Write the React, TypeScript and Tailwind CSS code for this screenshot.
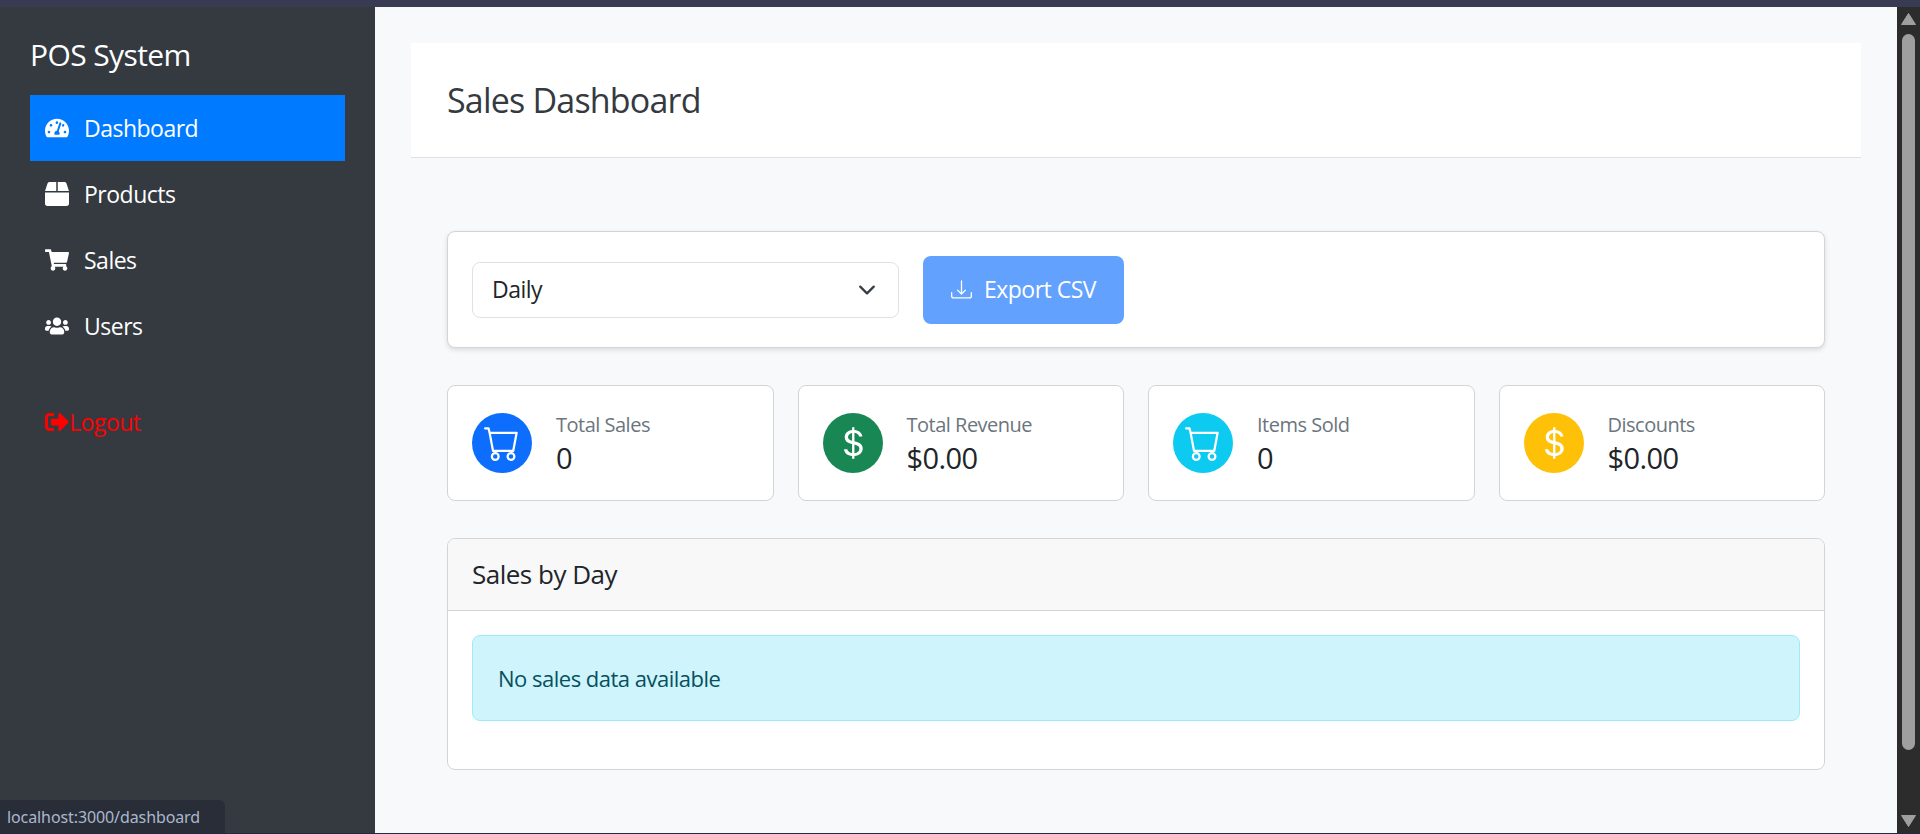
import React from 'react';
import { FaTachometerAlt, FaBox, FaShoppingCart, FaUsers, FaSignOutAlt } from 'react-icons/fa';
import { BsCart, BsCurrencyDollar, BsDownload, BsChevronDown } from 'react-icons/bs';

const navItems = [
  { label: 'Dashboard', icon: FaTachometerAlt, active: true },
  { label: 'Products', icon: FaBox, active: false },
  { label: 'Sales', icon: FaShoppingCart, active: false },
  { label: 'Users', icon: FaUsers, active: false },
];

const stats = [
  { label: 'Total Sales', value: '0', icon: BsCart, color: 'bg-[#0d6efd]' },
  { label: 'Total Revenue', value: '$0.00', icon: BsCurrencyDollar, color: 'bg-[#198754]' },
  { label: 'Items Sold', value: '0', icon: BsCart, color: 'bg-[#0dcaf0]' },
  { label: 'Discounts', value: '$0.00', icon: BsCurrencyDollar, color: 'bg-[#ffc107]' },
];

const Sidebar = () => (
  <aside className="w-[375px] shrink-0 bg-[#343a40] px-[30px] pt-[30px]">
    <h1 className="text-[30px] leading-[36px] font-medium text-white tracking-[-0.6px] mb-[22px]">POS System</h1>
    <nav className="flex flex-col">
      {navItems.map(({ label, icon: Icon, active }) => (
        <a
          key={label}
          href="#"
          className={`flex items-center h-[66px] px-[15px] text-[23px] tracking-[-0.5px] text-white ${active ? 'bg-[#007bff]' : ''}`}
        >
          <Icon className="w-[24px] h-[24px] mr-[15px] shrink-0" />
          <span>{label}</span>
        </a>
      ))}
    </nav>
    <a href="#" className="flex items-center h-[66px] px-[15px] mt-[30px] text-[23px] tracking-[-0.5px] text-[#ff0000]">
      <FaSignOutAlt className="w-[24px] h-[24px] shrink-0" />
      <span>Logout</span>
    </a>
  </aside>
);

const StatCard = ({ label, value, icon: Icon, color }: (typeof stats)[number]) => (
  <div className="flex items-center h-[116px] px-[24px] bg-white border border-[#d3d4d5] rounded-[8px]">
    <div className={`flex items-center justify-center w-[60px] h-[60px] rounded-full text-white ${color}`}>
      <Icon className="w-[36px] h-[36px]" />
    </div>
    <div className="ml-[24px]">
      <div className="text-[20px] leading-[30px] text-[#6c757d] tracking-[-0.5px]">{label}</div>
      <div className="text-[29px] leading-[36px] font-medium text-[#212529] tracking-[-0.6px]">{value}</div>
    </div>
  </div>
);

const Scrollbar = () => (
  <div className="w-[23px] shrink-0 bg-[#2c2c2c] flex flex-col items-center">
    <svg viewBox="0 0 15 12" className="w-[15px] h-[12px] mt-[6px] shrink-0">
      <path d="M7.5 0.5 L14.5 11.5 L0.5 11.5 Z" fill="#9f9f9f" stroke="#9f9f9f" strokeLinejoin="round" />
    </svg>
    <div className="w-[13px] flex-1 mt-[9px] mb-[65px] rounded-full bg-[#9f9f9f]" />
    <svg viewBox="0 0 15 12" className="w-[15px] h-[12px] mb-[6px] shrink-0">
      <path d="M0.5 0.5 L14.5 0.5 L7.5 11.5 Z" fill="#9f9f9f" stroke="#9f9f9f" strokeLinejoin="round" />
    </svg>
  </div>
);

export default function App() {
  return (
    <div className="relative h-[834px] flex flex-col overflow-hidden bg-[#f8f9fa] font-['Open_Sans','Noto_Sans',sans-serif]">
      <div className="h-[7px] shrink-0 bg-[#383b52]" />
      <div className="flex flex-1 min-h-0">
        <Sidebar />
        <main className="flex-1 min-w-0 p-[36px]">
          <header className="flex items-center h-[115px] px-[36px] bg-white border-b border-[#dee2e6]">
            <h2 className="text-[34px] font-medium text-[#343a40] tracking-[-0.8px]">Sales Dashboard</h2>
          </header>
          <div className="px-[36px] pt-[73px]">
            <section className="flex items-center h-[117px] px-[24px] gap-[24px] bg-white border border-[#d3d4d5] rounded-[8px] shadow-[0_2px_5px_rgba(0,0,0,0.12)]">
              <div className="flex items-center justify-between w-[427px] h-[56px] pl-[19px] pr-[22px] bg-white border border-[#dee2e6] rounded-[8px] text-[23px] tracking-[-0.5px] text-[#212529]">
                <span>Daily</span>
                <BsChevronDown className="w-[18px] h-[18px] text-[#343a40] stroke-1" />
              </div>
              <button className="flex items-center justify-center w-[201px] h-[68px] bg-[#62a1fe] rounded-[8px] text-[23px] tracking-[-0.5px] text-white">
                <BsDownload className="w-[21px] h-[21px] mr-[12px]" />
                Export CSV
              </button>
            </section>
            <section className="grid grid-cols-4 gap-[24px] mt-[37px]">
              {stats.map((s) => (
                <StatCard key={s.label} {...s} />
              ))}
            </section>
            <section className="mt-[37px] h-[232px] bg-white border border-[#d3d4d5] rounded-[8px] overflow-hidden">
              <div className="flex items-center h-[72px] px-[24px] bg-[#f8f8f8] border-b border-[#d3d4d5]">
                <h3 className="text-[26px] font-medium text-[#212529] tracking-[-0.5px]">Sales by Day</h3>
              </div>
              <div className="p-[24px]">
                <div className="flex items-center h-[86px] px-[25px] bg-[#cff4fc] border border-[#9eeaf9] rounded-[8px] text-[22px] tracking-[-0.5px] text-[#055160]">
                  No sales data available
                </div>
              </div>
            </section>
          </div>
        </main>
        <Scrollbar />
      </div>
      <div className="h-px shrink-0 bg-[#1f2a44]" />
      <div className="absolute left-0 bottom-[1px] h-[33px] w-[225px] pl-[7px] flex items-center bg-[#292d38] rounded-tr-[6px] text-[16px] tracking-[-0.1px] text-[#a9b8cc] font-['Noto_Sans',sans-serif]">
        localhost:3000/dashboard
      </div>
    </div>
  );
}
